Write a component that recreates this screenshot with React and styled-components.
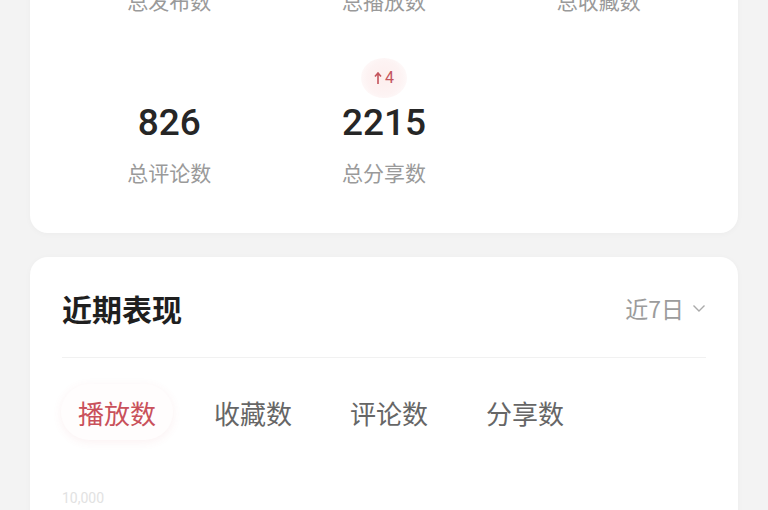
import React, { useState } from 'react';
import styled, { createGlobalStyle } from 'styled-components';

const GlobalStyle = createGlobalStyle`
  html, body {
    margin: 0;
    padding: 0;
    background: #f3f3f3;
    overflow: hidden;
  }
  body {
    font-family: "Noto Sans CJK SC", "Noto Sans", sans-serif;
  }
`;

const Page = styled.div`
  padding: 0 30px;
  display: flex;
  flex-direction: column;
  gap: 24px;
`;

const Card = styled.section`
  background: #fff;
  border-radius: 18px;
  box-shadow: 0 1px 6px rgba(0, 0, 0, 0.03);
  padding: ${props => props.padding || '32px'};
  margin-top: ${props => props.offset || 0};
`;

const StatsGrid = styled.div`
  display: grid;
  grid-template-columns: repeat(3, 1fr);
  row-gap: 42px;
`;

const Stat = styled.div`
  display: flex;
  flex-direction: column;
  align-items: center;
`;

const BadgeSlot = styled.div`
  height: 44px;
  display: flex;
  align-items: center;
  justify-content: center;
`;

const Badge = styled.span`
  display: flex;
  align-items: center;
  justify-content: center;
  gap: 3px;
  width: 46px;
  height: 40px;
  border-radius: 50%;
  background: radial-gradient(circle, #fdeeee 0%, #fdf3f3 55%, rgba(255, 255, 255, 0) 100%);
  color: #c4545c;
  font-family: Roboto, "Noto Sans", sans-serif;
  font-size: 16px;
  line-height: 1;
`;

const Value = styled.div`
  font-family: Roboto, "Noto Sans", sans-serif;
  font-weight: 500;
  font-size: 37px;
  line-height: 46px;
  color: #262626;
`;

const Label = styled.div`
  margin-top: 12px;
  font-size: 21px;
  line-height: 28px;
  color: #9a9a9a;
`;

const Header = styled.div`
  display: flex;
  align-items: center;
  justify-content: space-between;
  padding-bottom: 30px;
  border-bottom: 1px solid #f1f1f1;
`;

const Title = styled.h2`
  margin: 0;
  font-size: 30px;
  line-height: 38px;
  font-weight: 700;
  color: #1f1f1f;
`;

const RangePicker = styled.button`
  display: flex;
  align-items: center;
  gap: 8px;
  border: 0;
  background: none;
  padding: 0;
  font-family: inherit;
  font-size: 23px;
  color: #9c9c9c;
  cursor: pointer;
`;

const Tabs = styled.div`
  display: flex;
  gap: 24px;
  margin: 26px 0 0 -1px;
`;

const Tab = styled.button`
  border: 0;
  height: 56px;
  padding: 0 17px;
  border-radius: 28px;
  font-family: inherit;
  font-size: 26px;
  background: ${props => (props.active ? '#fffdfd' : 'transparent')};
  box-shadow: ${props => (props.active ? '0 2px 10px rgba(200, 80, 90, 0.08)' : 'none')};
  color: ${props => (props.active ? '#c9515b' : '#666')};
  cursor: pointer;
`;

const Chart = styled.div`
  margin-top: 50px;
  height: 120px;
`;

const AxisLabel = styled.div`
  font-family: Roboto, "Noto Sans", sans-serif;
  font-size: 14px;
  color: #e2e2e2;
`;

const Chevron = () => (
  <svg width="14" height="9" viewBox="0 0 14 9" fill="none">
    <polyline points="1.5,1.5 7,7 12.5,1.5" stroke="#aaa" strokeWidth="1.4" />
  </svg>
);

const stats = [
  { value: '36', label: '总发布数' },
  { value: '5.2万', label: '总播放数' },
  { value: '1368', label: '总收藏数' },
  { value: '826', label: '总评论数' },
  { value: '2215', label: '总分享数', delta: 4 },
];

const tabs = ['播放数', '收藏数', '评论数', '分享数'];

const App = () => {
  const [tab, setTab] = useState(0);
  return (
    <>
      <GlobalStyle />
      <Page>
        <Card offset="-146px" padding="30px 32px 47px">
          <StatsGrid>
            {stats.map(s => (
              <Stat key={s.label}>
                <BadgeSlot>
                  {s.delta && (
                    <Badge>
                      <svg width="8" height="13" viewBox="0 0 8 13">
                        <path d="M4 1 L4 12 M1 4.5 L4 1 L7 4.5" stroke="#c4545c" strokeWidth="1.6" fill="none" />
                      </svg>
                      {s.delta}
                    </Badge>
                  )}
                </BadgeSlot>
                <Value>{s.value}</Value>
                <Label>{s.label}</Label>
              </Stat>
            ))}
          </StatsGrid>
        </Card>
        <Card padding="32px 32px 0">
          <Header>
            <Title>近期表现</Title>
            <RangePicker>
              近7日
              <Chevron />
            </RangePicker>
          </Header>
          <Tabs>
            {tabs.map((t, i) => (
              <Tab key={t} active={tab === i} onClick={() => setTab(i)}>
                {t}
              </Tab>
            ))}
          </Tabs>
          <Chart>
            <AxisLabel>10,000</AxisLabel>
          </Chart>
        </Card>
      </Page>
    </>
  );
};

export default App;
